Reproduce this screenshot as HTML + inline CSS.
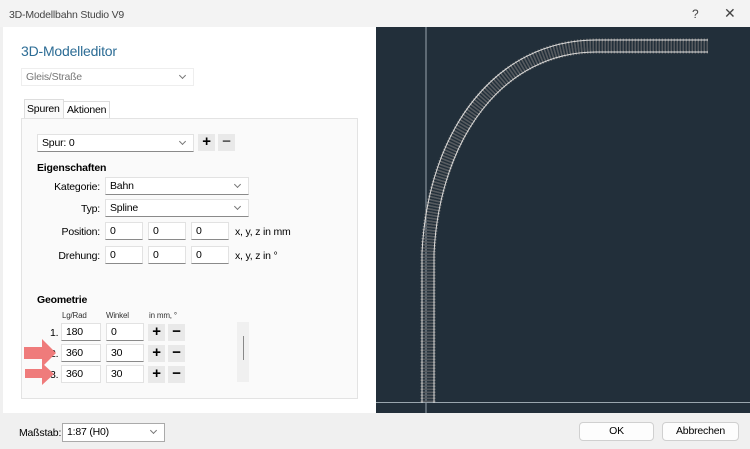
<!DOCTYPE html>
<html><head><meta charset="utf-8"><style>
body{margin:0;width:750px;height:449px;overflow:hidden;background:#f0f0f0;font-family:"Liberation Sans",sans-serif;font-size:10.5px;letter-spacing:-0.2px;color:#000;position:relative}
.a{position:absolute}
.in{position:absolute;background:#fff;border:1px solid #e2e2e2;border-bottom:1px solid #8a8a8a;height:17px;box-sizing:border-box;padding:2px 4px;font-size:10.5px;line-height:12px}
.dd::after{content:"";position:absolute;right:8px;top:4px;width:4px;height:4px;border-right:1px solid #777;border-bottom:1px solid #777;transform:rotate(45deg)}
.pm{position:absolute;width:17px;height:17px;background:#e9e9e9;text-align:center;font-size:15px;line-height:16px;font-weight:bold}
.lb{position:absolute;text-align:right}
.btn{position:absolute;background:#fdfdfd;border:1px solid #d0d0d0;border-radius:4px;height:19px;box-sizing:border-box;text-align:center;line-height:17px;font-size:10.5px}
</style></head><body>
<div class="a" style="left:0;top:0;width:750px;height:27px;background:#f3f3f3"></div>
<div class="a" style="left:9px;top:9px;color:#444;font-size:10.5px">3D-Modellbahn Studio V9</div>
<div class="a" style="left:692px;top:7px;color:#444;font-size:12px">?</div>
<div class="a" style="left:724px;top:5px;color:#444;font-size:14px">✕</div>
<div class="a" style="left:3px;top:27px;width:373px;height:386px;background:#fff"></div>
<div class="a" style="left:21px;top:43px;color:#2c6c95;font-size:14px">3D-Modelleditor</div>
<div class="in dd" style="left:21px;top:68px;width:173px;height:18px;border-color:#eee;color:#777">Gleis/Straße</div>
<div class="a" style="left:24px;top:99px;width:40px;height:20px;background:#fafafa;border:1px solid #ddd;border-bottom:none;padding:3px 2px;box-sizing:border-box">Spuren</div>
<div class="a" style="left:64px;top:101px;width:46px;height:17px;border:1px solid #ddd;border-bottom:none;border-left:none;padding:2px 3px;box-sizing:border-box">Aktionen</div>
<div class="a" style="left:21px;top:118px;width:335px;height:279px;background:#fafafa;border:1px solid #e3e3e3"></div>
<div class="in dd" style="left:37px;top:134px;width:157px;height:18px">Spur: 0</div>
<div class="pm" style="left:198px;top:134px">+</div><div class="pm" style="left:218px;top:134px;color:#555">−</div>
<div class="a" style="left:37px;top:162px;font-weight:bold">Eigenschaften</div>
<div class="lb" style="left:40px;width:60px;top:181px">Kategorie:</div>
<div class="in dd" style="left:105px;top:177px;width:144px;height:18px">Bahn</div>
<div class="lb" style="left:40px;width:60px;top:203px">Typ:</div>
<div class="in dd" style="left:105px;top:199px;width:144px;height:18px">Spline</div>
<div class="lb" style="left:40px;width:60px;top:226px">Position:</div>
<div class="in" style="left:105px;top:222px;width:38px;height:18px">0</div>
<div class="in" style="left:148px;top:222px;width:38px;height:18px">0</div>
<div class="in" style="left:191px;top:222px;width:38px;height:18px">0</div>
<div class="a" style="left:235px;top:226px">x, y, z in mm</div>
<div class="lb" style="left:40px;width:60px;top:250px">Drehung:</div>
<div class="in" style="left:105px;top:246px;width:38px;height:18px">0</div>
<div class="in" style="left:148px;top:246px;width:38px;height:18px">0</div>
<div class="in" style="left:191px;top:246px;width:38px;height:18px">0</div>
<div class="a" style="left:235px;top:250px">x, y, z in °</div>
<div class="a" style="left:37px;top:294px;font-weight:bold">Geometrie</div>
<div class="a" style="left:62px;top:311px;font-size:8px;color:#333">Lg/Rad</div>
<div class="a" style="left:106px;top:311px;font-size:8px;color:#333">Winkel</div>
<div class="a" style="left:149px;top:311px;font-size:8px;color:#333">in mm, °</div>
<div class="a" style="left:50px;top:327px">1.</div>
<div class="in" style="left:61px;top:323px;width:40px;height:18px">180</div>
<div class="in" style="left:106px;top:323px;width:38px;height:18px">0</div>
<div class="pm" style="left:148px;top:324px">+</div><div class="pm" style="left:168px;top:324px">−</div>
<div class="a" style="left:50px;top:348px">2.</div>
<div class="in" style="left:61px;top:344px;width:40px;height:18px">360</div>
<div class="in" style="left:106px;top:344px;width:38px;height:18px">30</div>
<div class="pm" style="left:148px;top:345px">+</div><div class="pm" style="left:168px;top:345px">−</div>
<div class="a" style="left:50px;top:369px">3.</div>
<div class="in" style="left:61px;top:365px;width:40px;height:18px;border-bottom-color:#e2e2e2">360</div>
<div class="in" style="left:106px;top:365px;width:38px;height:18px;border-bottom-color:#e2e2e2">30</div>
<div class="pm" style="left:148px;top:366px">+</div><div class="pm" style="left:168px;top:366px">−</div>
<div class="a" style="left:237px;top:322px;width:12px;height:60px;background:#f0f0f0"></div>
<div class="a" style="left:243px;top:336px;width:1px;height:24px;background:#888"></div>
<svg class="a" style="left:20px;top:335px" width="40" height="52"><g fill="#ef7b7b"><path d="M4 12h18v-8l14 14-14 14v-8H4z"/><path d="M5 34h17v-6l12 11-12 11v-7H5z"/></g></svg>
<div class="a" style="left:376px;top:27px;width:374px;height:386px;background:#222f3a"></div>
<svg class="a" style="left:376px;top:27px" width="374" height="386">
<line x1="50" y1="0" x2="50" y2="386" stroke="#9aa6ae" stroke-width="1"/>
<line x1="0" y1="375.5" x2="374" y2="375.5" stroke="#9aa6ae" stroke-width="1"/>
<g fill="none">
<path d="M332 19H220C125 19 58 105 52 226V376" stroke="#6f6f6f" stroke-width="15" stroke-dasharray="1.3 1.7"/>
<path d="M332 19H220C125 19 58 105 52 226V376" stroke="#555a5f" stroke-width="9" stroke-dasharray="1.5 1.5"/>
<path d="M332 13H220C121 13 52 101 46 226V376" stroke="#ddd" stroke-width="1"/>
<path d="M332 25H220C129 25 64 109 58 226V376" stroke="#ddd" stroke-width="1"/>
</g></svg>
<div class="a" style="left:19px;top:427px">Maßstab:</div>
<div class="in dd" style="left:62px;top:423px;width:103px;height:19px;border:1px solid #aaa">1:87 (H0)</div>
<div class="btn" style="left:579px;top:422px;width:75px">OK</div>
<div class="btn" style="left:662px;top:422px;width:77px">Abbrechen</div>
</body></html>
